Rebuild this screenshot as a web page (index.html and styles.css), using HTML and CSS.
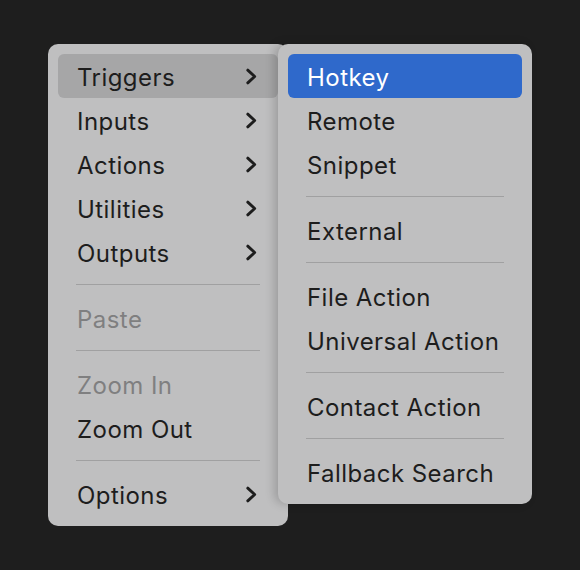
FILE: index.html
```html
<!DOCTYPE html>
<html>
<head>
<meta charset="utf-8">
<link rel="stylesheet" href="styles.css">
</head>
<body>
<div class="stage">
  <div class="menu main">
    <div class="item active"><span>Triggers</span><svg class="chev" viewBox="0 0 12 16"><path d="M2.5 2 L9 8 L2.5 14"/></svg></div>
    <div class="item"><span>Inputs</span><svg class="chev" viewBox="0 0 12 16"><path d="M2.5 2 L9 8 L2.5 14"/></svg></div>
    <div class="item"><span>Actions</span><svg class="chev" viewBox="0 0 12 16"><path d="M2.5 2 L9 8 L2.5 14"/></svg></div>
    <div class="item"><span>Utilities</span><svg class="chev" viewBox="0 0 12 16"><path d="M2.5 2 L9 8 L2.5 14"/></svg></div>
    <div class="item"><span>Outputs</span><svg class="chev" viewBox="0 0 12 16"><path d="M2.5 2 L9 8 L2.5 14"/></svg></div>
    <div class="sep"></div>
    <div class="item disabled"><span>Paste</span></div>
    <div class="sep"></div>
    <div class="item disabled"><span>Zoom In</span></div>
    <div class="item"><span>Zoom Out</span></div>
    <div class="sep"></div>
    <div class="item"><span>Options</span><svg class="chev" viewBox="0 0 12 16"><path d="M2.5 2 L9 8 L2.5 14"/></svg></div>
  </div>
  <div class="menu sub">
    <div class="item selected"><span>Hotkey</span></div>
    <div class="item"><span>Remote</span></div>
    <div class="item"><span>Snippet</span></div>
    <div class="sep"></div>
    <div class="item"><span>External</span></div>
    <div class="sep"></div>
    <div class="item"><span>File Action</span></div>
    <div class="item"><span>Universal Action</span></div>
    <div class="sep"></div>
    <div class="item"><span>Contact Action</span></div>
    <div class="sep"></div>
    <div class="item"><span>Fallback Search</span></div>
  </div>
</div>
</body>
</html>
```

FILE: styles.css
```css
html, body {
  margin: 0;
  padding: 0;
  background: #1e1e1e;
  width: 580px;
  height: 570px;
  overflow: hidden;
}
.stage {
  display: flex;
  align-items: flex-start;
  padding: 44px 0 0 48px;
  font-family: Inter, "Noto Sans", sans-serif;
  font-size: 24px;
  color: #1d1d1d;
}
.menu {
  background: #bfbfc0;
  border-radius: 10px;
  padding: 10px 10px 10px;
  box-sizing: border-box;
  display: flex;
  flex-direction: column;
}
.main {
  width: 240px;
}
.sub {
  width: 254px;
  margin-left: -10px;
  box-shadow: -4px 0 10px rgba(0, 0, 0, 0.18);
  position: relative;
}
.item {
  height: 44px;
  box-sizing: border-box;
  display: flex;
  align-items: center;
  justify-content: space-between;
  padding: 2px 20px 0 19px;
  border-radius: 6px;
  letter-spacing: 0.45px;
}
.item.active {
  background: #a6a6a7;
}
.item.selected {
  background: #2f69cb;
  color: #ffffff;
}
.item.disabled {
  color: #7f7f80;
}
.chev {
  width: 13px;
  height: 17px;
  margin-top: -1px;
  fill: none;
  stroke: #1d1d1d;
  stroke-width: 2.7;
  stroke-linecap: round;
  stroke-linejoin: round;
}
.sep {
  height: 1px;
  background: #a0a0a1;
  margin: 10px 18px 11px;
}
```
